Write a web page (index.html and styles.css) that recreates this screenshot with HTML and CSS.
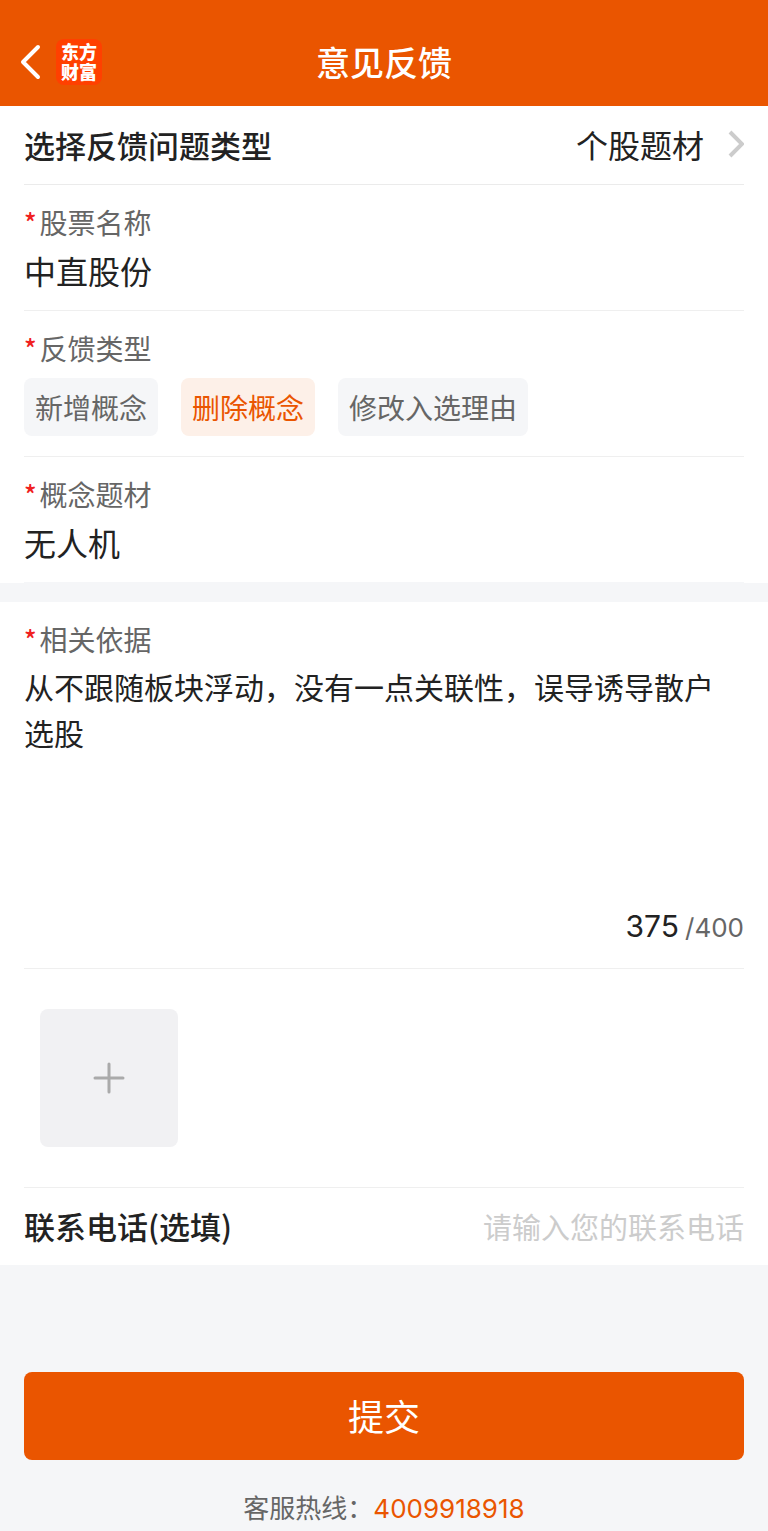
FILE: index.html
```
<!DOCTYPE html>
<html lang="zh-CN">
<head>
  <meta charset="UTF-8">
  <meta name="viewport" content="width=device-width, initial-scale=1">
  <title>意见反馈</title>
  <link rel="stylesheet" href="styles.css">
</head>
<body>
  <header class="header">
    <a class="back" href="#" aria-label="返回">
      <svg width="22" height="36" viewBox="0 0 22 36" fill="none" stroke="#fff" stroke-width="4" stroke-linecap="round" stroke-linejoin="round">
        <path d="M18 3 3 18l15 15"/>
      </svg>
    </a>
    <a class="logo" href="#">东方财富</a>
    <h1 class="title">意见反馈</h1>
  </header>

  <form class="form">
    <div class="card">
      <div class="row">
        <span class="row-title" id="type-label">选择反馈问题类型</span>
        <button type="button" class="picker" aria-labelledby="type-label type-value">
          <span id="type-value">个股题材</span>
          <svg width="16" height="28" viewBox="0 0 16 28" fill="none" stroke="#ccc" stroke-width="4">
            <path d="M2 2l12 12L2 26"/>
          </svg>
        </button>
      </div>

      <div class="field">
        <label class="label" for="stock"><span class="star">*</span>股票名称</label>
        <input class="value" type="text" id="stock" name="stock" value="中直股份">
      </div>

      <fieldset class="field">
        <legend class="label"><span class="star">*</span>反馈类型</legend>
        <div class="chips">
          <label class="chip"><input type="radio" name="kind" value="add"><span>新增概念</span></label>
          <label class="chip"><input type="radio" name="kind" value="delete" checked><span>删除概念</span></label>
          <label class="chip"><input type="radio" name="kind" value="edit"><span>修改入选理由</span></label>
        </div>
      </fieldset>

      <div class="field last">
        <label class="label" for="concept"><span class="star">*</span>概念题材</label>
        <input class="value" type="text" id="concept" name="concept" value="无人机">
      </div>
    </div>

    <div class="card">
      <div class="field reason">
        <label class="label" for="reason"><span class="star">*</span>相关依据</label>
        <textarea id="reason" name="reason" maxlength="400">从不跟随板块浮动，没有一点关联性，误导诱导散户选股</textarea>
        <div class="counter"><span class="left">375</span><span>/400</span></div>
      </div>

      <div class="upload">
        <button type="button" class="add" aria-label="添加图片">
          <svg width="32" height="32" viewBox="0 0 32 32" fill="none" stroke="#aaa" stroke-width="3" stroke-linecap="round">
            <path d="M16 2v28M2 16h28"/>
          </svg>
        </button>
      </div>

      <div class="row last">
        <label class="row-title" for="phone">联系电话(选填)</label>
        <input class="phone" type="tel" id="phone" name="phone" placeholder="请输入您的联系电话">
      </div>
    </div>

    <button type="submit" class="submit">提交</button>
  </form>

  <p class="hotline">客服热线：<a href="tel:4009918918">4009918918</a></p>
</body>
</html>
```
FILE: styles.css
```
* {
  box-sizing: border-box;
}

body {
  margin: 0;
  background-color: #f5f6f8;
  color: #222;
  font-family: "Noto Sans CJK SC", sans-serif;
  font-size: 32px;
}

input,
textarea,
button {
  font-family: inherit;
  color: inherit;
  border: none;
  outline: none;
  background: none;
  padding: 0;
  margin: 0;
}

/* Header */
.header {
  display: grid;
  grid-template-columns: 36px 1fr auto 1fr 36px;
  align-items: center;
  height: 106px;
  padding: 18px 20px 0;
  background-color: #ea5500;
  color: #fff;
}

.back {
  display: flex;
}

.logo {
  width: 46px;
  height: 46px;
  padding: 2px 5px;
  border-radius: 8px;
  background-color: #ff4000;
  color: #fff;
  font-size: 18px;
  font-weight: 900;
  line-height: 20px;
  text-decoration: none;
}

.title {
  margin: 0;
  font-size: 34px;
  font-weight: 500;
  line-height: 46px;
}

/* Form */
.card {
  padding: 0 24px;
  background-color: #fff;
  margin-bottom: 19px;
}

.row {
  display: flex;
  align-items: center;
  justify-content: space-between;
  height: 79px;
  padding-bottom: 2px;
  border-bottom: 1px solid #ebebeb;
}

.row-title {
  font-size: 31px;
  font-weight: 500;
}

.picker {
  display: flex;
  align-items: center;
  gap: 24px;
  font-size: 32px;
}

.field {
  margin: 0;
  padding: 17px 0 20px;
  border: none;
  border-bottom: 1px solid #efefef;
}

.field.last {
  border-bottom-color: #f5f6f8;
}

.label {
  display: flex;
  gap: 3px;
  float: left;
  width: 100%;
  margin-bottom: 8px;
  padding: 0;
  color: #666;
  font-size: 28px;
  line-height: 40px;
}

.star {
  color: #f02020;
  font-size: 26px;
  font-weight: 500;
}

.value {
  display: block;
  width: 100%;
  height: 40px;
  font-size: 32px;
}

.chips {
  display: flex;
  flex-wrap: wrap;
  gap: 23px;
  clear: both;
  padding-top: 2px;
}

.chip {
  position: relative;
  padding: 0 11px;
  border-radius: 8px;
  background-color: #f5f6f8;
  color: #666;
  font-size: 28px;
  line-height: 58px;
  cursor: pointer;
}

.chip input {
  position: absolute;
  opacity: 0;
}

.chip:has(input:checked) {
  background-color: #fdf0e8;
  color: #ea5500;
}

.reason {
  padding-bottom: 17px;
}

.reason .label {
  margin-bottom: 4px;
}

textarea {
  display: block;
  width: 100%;
  height: 240px;
  padding-right: 8px;
  font-size: 30px;
  line-height: 46px;
  resize: none;
}

.counter {
  display: flex;
  justify-content: flex-end;
  align-items: baseline;
  gap: 6px;
  color: #666;
  font-family: Inter, sans-serif;
  font-size: 26px;
  line-height: 46px;
}

.left {
  color: #222;
  font-size: 30px;
}

.upload {
  padding: 40px 16px;
  border-bottom: 1px solid #efefef;
}

.add {
  display: flex;
  align-items: center;
  justify-content: center;
  width: 138px;
  height: 138px;
  border-radius: 8px;
  background-color: #f1f1f3;
}

.row.last {
  height: 77px;
  border-bottom: none;
}

.phone {
  flex: 1;
  min-width: 0;
  font-size: 29px;
  text-align: right;
}

.phone::placeholder {
  color: #ccc;
}

.submit {
  display: block;
  width: calc(100% - 48px);
  height: 88px;
  margin: 107px 24px 27px;
  padding-bottom: 2px;
  border-radius: 8px;
  background-color: #ea5500;
  color: #fff;
  font-size: 36px;
}

.hotline {
  margin: 0;
  color: #666;
  font-size: 26px;
  line-height: 40px;
  text-align: center;
}

.hotline a {
  color: #ea5500;
  font-family: Inter, sans-serif;
  text-decoration: none;
}
```
